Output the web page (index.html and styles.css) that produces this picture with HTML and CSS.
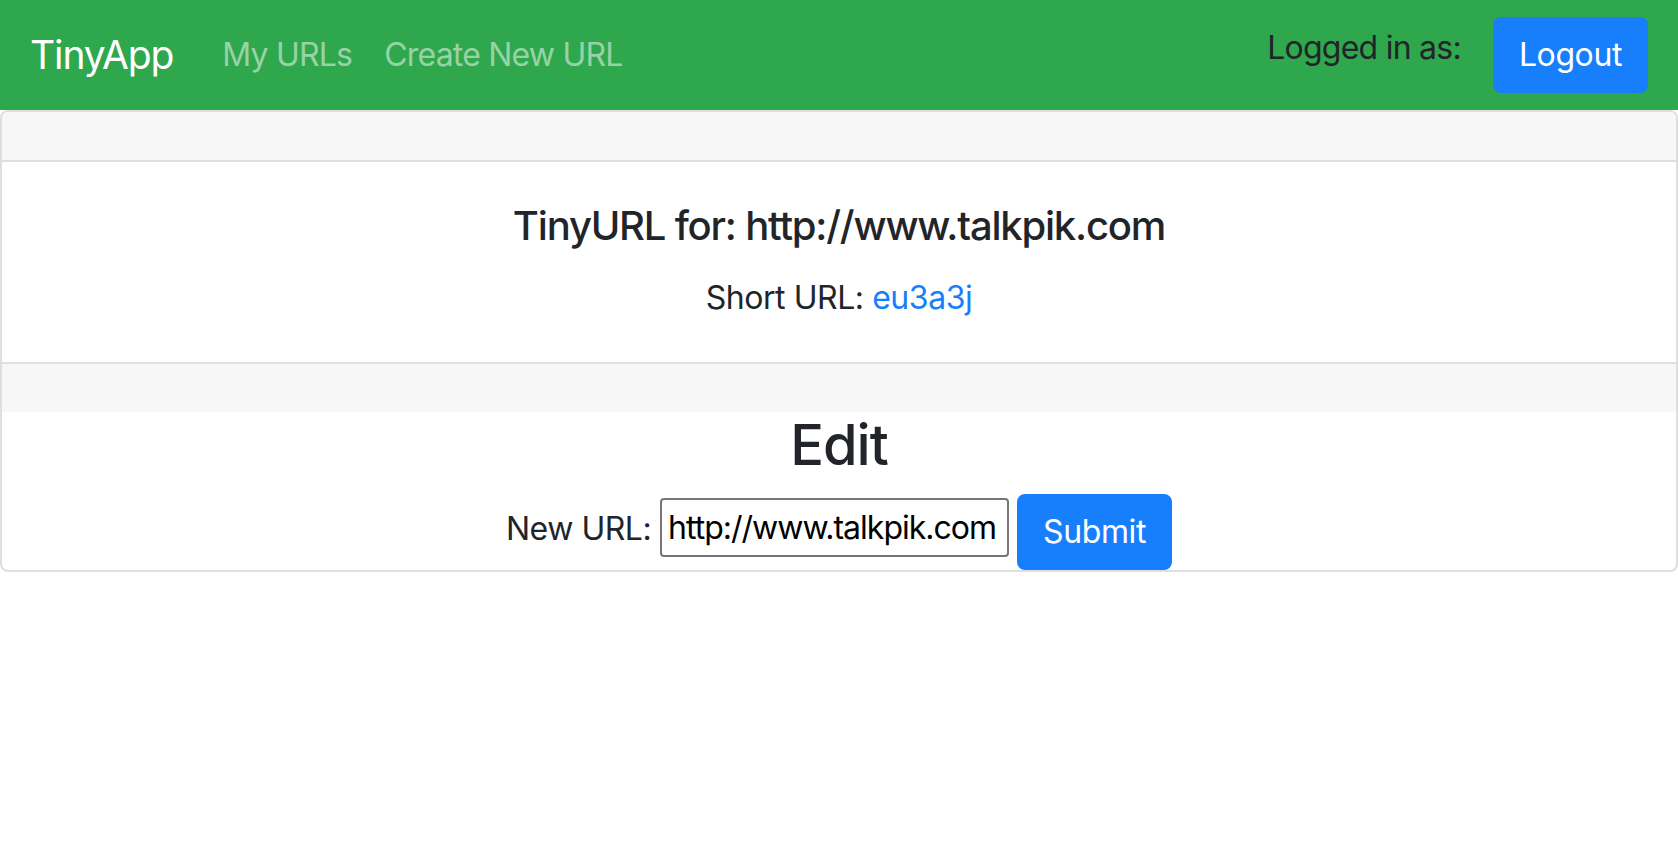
FILE: index.html
```html
<!DOCTYPE html>
<html lang="en">
<head>
<meta charset="utf-8">
<title>TinyApp</title>
<link rel="stylesheet" href="styles.css">
</head>
<body>
<nav class="navbar">
  <a class="brand" href="#">TinyApp</a>
  <div class="nav-links">
    <a class="nav-link" href="#">My URLs</a>
    <a class="nav-link" href="#">Create New URL</a>
  </div>
  <div class="nav-right">
    <span class="nav-text">Logged in as:</span>
    <button class="btn" type="button">Logout</button>
  </div>
</nav>
<div class="card">
  <div class="card-header"></div>
  <div class="card-body">
    <h5 class="card-title">TinyURL for: http://www.talkpik.com</h5>
    <p class="card-text">Short URL: <a class="link" href="#">eu3a3j</a></p>
  </div>
  <div class="card-footer"></div>
  <div class="edit">
    <h3 class="edit-title">Edit</h3>
    <form class="edit-form">
      <label class="edit-label" for="longURL">New URL:</label>
      <input class="edit-input" id="longURL" type="text" value="http://www.talkpik.com">
      <button class="btn" type="submit">Submit</button>
    </form>
  </div>
</div>
</body>
</html>
```
FILE: styles.css
```css
html, body {
  margin: 0;
  padding: 0;
  background: #ffffff;
}
body {
  font-family: Inter, "Noto Sans", sans-serif;
  font-size: 32px;
  line-height: 1.5;
  color: #212529;
  letter-spacing: -0.5px;
}
.navbar {
  display: flex;
  align-items: center;
  box-sizing: border-box;
  height: 110px;
  padding: 0 30px 0 30px;
  background: #2fa74d;
}
.brand {
  font-size: 39px;
  line-height: 1.2;
  letter-spacing: -1.1px;
  color: #ffffff;
  text-decoration: none;
  margin-right: 33px;
}
.nav-links {
  display: flex;
  flex: 1;
}
.nav-link {
  padding: 0 16px;
  font-size: 32px;
  line-height: 1.2;
  letter-spacing: -0.8px;
  color: rgba(255, 255, 255, 0.5);
  text-decoration: none;
}
.nav-right {
  display: flex;
  align-items: center;
}
.nav-text {
  line-height: 1.2;
  letter-spacing: -0.75px;
  margin-right: 32px;
  margin-bottom: 14px;
}
.btn {
  font-family: inherit;
  font-size: 32px;
  line-height: 48px;
  letter-spacing: -0.4px;
  padding: 12px 24px;
  border: 2px solid #177ffb;
  border-radius: 8px;
  background: #177ffb;
  color: #ffffff;
}
.card {
  border: 2px solid #dfdfdf;
  border-radius: 8px;
}
.card-header {
  height: 48px;
  background: #f7f7f7;
  border-bottom: 2px solid #dfdfdf;
  border-radius: 6px 6px 0 0;
}
.card-body {
  padding: 40px;
  text-align: center;
}
.card-title {
  margin: 0 0 24px;
  font-size: 40px;
  font-weight: 500;
  line-height: 1.2;
  letter-spacing: -1.2px;
}
.card-text {
  margin: 0;
  letter-spacing: -0.45px;
}
.link {
  color: #177ffb;
  text-decoration: none;
}
.card-footer {
  height: 48px;
  background: #f7f7f7;
  border-top: 2px solid #dfdfdf;
}
.edit {
  text-align: center;
}
.edit-title {
  margin: 0 0 15px;
  font-size: 56px;
  font-weight: 500;
  line-height: 1.2;
  letter-spacing: -1px;
}
.edit-form {
  display: flex;
  justify-content: center;
  align-items: flex-start;
  margin: 0;
}
.edit-label {
  margin-top: 11px;
  margin-right: 9px;
}
.edit-input {
  box-sizing: border-box;
  width: 349px;
  height: 59px;
  margin-top: 4px;
  margin-right: 8px;
  padding: 0 6px;
  border: 2px solid #767676;
  border-radius: 4px;
  font-family: inherit;
  font-size: 32px;
  letter-spacing: -1px;
  color: #000000;
}
```
